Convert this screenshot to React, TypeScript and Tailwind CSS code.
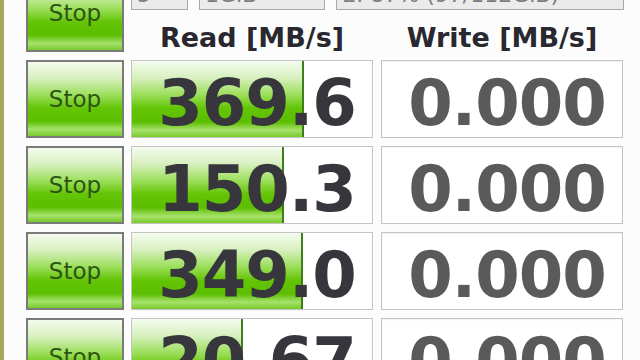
const rows = [
  { read: "369.6", write: "0.000", fill: 172 },
  { read: "150.3", write: "0.000", fill: 152 },
  { read: "349.0", write: "0.000", fill: 171 },
  { read: "20.67", write: "0.000", fill: 111 },
]

const green =
  "bg-[linear-gradient(to_bottom,#f4fbee_0%,#d8f0c0_22%,#9ade58_45%,#64c406_62%,#5cbe00_80%,#a6e26c_91%,#78ca2c_100%)]"

function StopButton() {
  return (
    <div
      className={`w-[98px] h-[78px] shrink-0 border-2 border-[#7a7a7a] ${green} flex items-center justify-center`}
    >
      <span className="text-[23px] text-[#2c5412] font-['DejaVu_Sans',sans-serif] leading-none">Stop</span>
    </div>
  )
}

function ReadCell({ value, fill }: { value: string; fill: number }) {
  return (
    <div className="relative w-[242px] h-[78px] shrink-0 border border-[#c4c4c4] bg-white overflow-hidden">
      {/* progress bar */}
      <div
        className={`absolute left-0 top-0 bottom-0 border-r-2 border-[#3f7d1f] ${green}`}
        style={{ width: fill }}
      />
      <div className="relative h-full flex items-center justify-center pl-[10px] pt-[7px]">
        <span className="text-[64px] leading-none font-bold text-[#36363c] tracking-[-1px] font-['DejaVu_Sans',sans-serif]">
          {value}
        </span>
      </div>
    </div>
  )
}

function WriteCell({ value }: { value: string }) {
  return (
    <div className="w-[242px] h-[78px] shrink-0 border border-[#c4c4c4] bg-white shadow-[inset_0_1px_2px_rgba(0,0,0,0.06)] flex items-center justify-center pl-[10px] pt-[7px]">
      <span className="text-[64px] leading-none font-bold text-[#5a5a5c] tracking-[-1px] font-['DejaVu_Sans',sans-serif]">
        {value}
      </span>
    </div>
  )
}

function Combo({ w, text }: { w: string; text: string }) {
  return (
    <div
      className={`${w} h-[36px] shrink-0 bg-[#ebebeb] border border-[#a8a8a8] flex items-end px-[5px] pb-[3px]`}
    >
      <span className="text-[22px] leading-none text-[#7c7c7c] font-['DejaVu_Sans',sans-serif] whitespace-nowrap">
        {text}
      </span>
    </div>
  )
}

export default function App() {
  return (
    <div className="w-[640px] h-[360px] overflow-hidden bg-[#fcfcfc] flex">
      <div className="w-[4px] shrink-0 bg-[#a4aa58]" />
      <div className="flex-1 pl-[22px] flex flex-col gap-[8px] -mt-[26px]">
        {/* top row: stop + settings + headers */}
        <div className="flex gap-[7px] h-[78px] shrink-0">
          <StopButton />
          <div className="flex flex-col w-[492px]">
            <div className="flex gap-[11px]">
              <Combo w="w-[57px]" text="5" />
              <Combo w="w-[126px]" text="1GiB" />
              <Combo w="w-[288px]" text="E: 87% (97/112GiB)" />
            </div>
            <div className="flex gap-[8px] pt-[12px]">
              <div className="w-[242px] text-center text-[27px] leading-[32px] font-bold text-[#28282e] font-['DejaVu_Sans',sans-serif]">
                Read [MB/s]
              </div>
              <div className="w-[242px] text-center text-[27px] leading-[32px] font-bold text-[#28282e] font-['DejaVu_Sans',sans-serif]">
                Write [MB/s]
              </div>
            </div>
          </div>
        </div>
        {rows.map((r, i) => (
          <div key={i} className="flex gap-[7px] shrink-0">
            <StopButton />
            <div className="flex gap-[8px]">
              <ReadCell value={r.read} fill={r.fill} />
              <WriteCell value={r.write} />
            </div>
          </div>
        ))}
      </div>
    </div>
  )
}
